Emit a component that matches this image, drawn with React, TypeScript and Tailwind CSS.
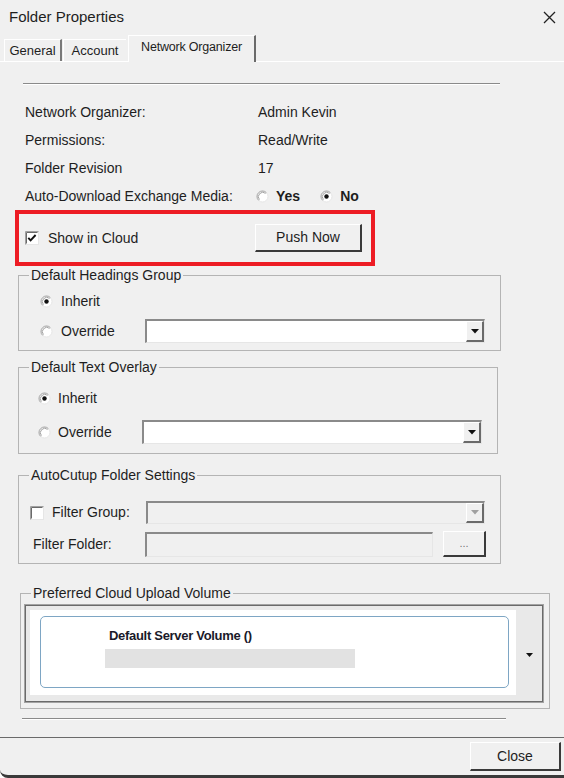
import React from "react";

function Radio({ checked }: { checked?: boolean }) {
  return (
    <svg width="13" height="13" viewBox="0 0 13 13" className="shrink-0">
      <circle cx="6.5" cy="6.5" r="5.5" fill="#fff" stroke="#e6e6e6" />
      <path d="M2.61 10.39 A5.5 5.5 0 0 1 10.39 2.61" fill="none" stroke="#a8a8a8" />
      <path d="M3.4 9.6 A4.4 4.4 0 0 1 9.6 3.4" fill="none" stroke="#7a7a7a" strokeWidth="0.7" />
      {checked && <circle cx="6.5" cy="6.5" r="2.2" fill="#111" />}
    </svg>
  );
}

function Check({ checked }: { checked?: boolean }) {
  return (
    <svg width="14" height="14" viewBox="0 0 14 14" className="shrink-0">
      <rect x="0.5" y="0.5" width="13" height="13" fill="#fff" stroke="#e6e6e6" />
      <path d="M0.5 13.5 V0.5 H13.5" fill="none" stroke="#a0a0a0" />
      <path d="M1.5 12.5 V1.5 H12.5" fill="none" stroke="#6a6a6a" />
      {checked && <path d="M3.3 6.8 L5.6 9.3 L10.6 4" fill="none" stroke="#111" strokeWidth="1.9" />}
    </svg>
  );
}

function Arrow({ disabled }: { disabled?: boolean }) {
  return (
    <svg width="8" height="5" viewBox="0 0 8 5">
      <polygon points="0,0 8,0 4,4.5" fill={disabled ? "#a0a0a0" : "#111"} />
    </svg>
  );
}

function Combo({ className, disabled }: { className: string; disabled?: boolean }) {
  return (
    <div
      className={`flex border-t-2 border-l-2 border-t-[#8a8a8a] border-l-[#8a8a8a] border-b border-r border-b-[#e6e6e6] border-r-[#e6e6e6] ${
        disabled ? "bg-[#f0f0f0]" : "bg-white"
      } ${className}`}
    >
      <div className="flex-1" />
      <div className="w-[18px] flex items-center justify-center bg-[#f0f0f0] border-t border-l border-t-white border-l-white border-b-2 border-r-2 border-b-[#6a6a6a] border-r-[#6a6a6a]">
        <Arrow disabled={disabled} />
      </div>
    </div>
  );
}

function Button({ className, children }: { className: string; children: React.ReactNode }) {
  return (
    <div
      className={`flex items-center justify-center bg-[#f0f0f0] border-t border-l border-t-white border-l-white border-b-2 border-r-2 border-b-[#3a3a3a] border-r-[#3a3a3a] ${className}`}
    >
      {children}
    </div>
  );
}

function Group({ title, className, children }: { title: string; className: string; children: React.ReactNode }) {
  return (
    <fieldset className={`border border-[#b4b4b4] ${className}`}>
      <legend className="ml-[10px] px-[2px] text-[14px] leading-[16px]">{title}</legend>
      {children}
    </fieldset>
  );
}

const info = [
  ["Network Organizer:", "Admin Kevin"],
  ["Permissions:", "Read/Write"],
  ["Folder Revision", "17"],
];

export default function App() {
  return (
    <div className="w-[564px] h-[778px] bg-[#f0f0f0] text-[#1e1e1e] font-['Liberation_Sans',Arial,sans-serif] flex flex-col overflow-hidden rounded-bl-[8px] border-b-[3px] border-[#3a3a3a]">
      {/* title bar */}
      <div className="h-[34px] shrink-0 flex items-center justify-between pl-[9px] pr-[8px]">
        <span className="text-[15px]">Folder Properties</span>
        <svg width="13" height="13" viewBox="0 0 13 13">
          <path d="M1 1 L12 12 M12 1 L1 12" stroke="#222" strokeWidth="1.3" />
        </svg>
      </div>

      {/* tabs */}
      <div className="h-[28px] shrink-0 flex items-end pl-[4px] border-b border-white">
        <div className="w-[58px] h-[22px] flex items-center justify-center text-[13px] border-t border-l border-t-white border-l-white border-r-2 border-r-[#7a7a7a]">
          General
        </div>
        <div className="w-[63px] ml-[1px] h-[22px] flex items-center justify-center text-[13px] border-t border-l border-t-white border-l-white">
          Account
        </div>
        <div className="w-[128px] ml-[2px] h-[27px] -mb-px bg-[#f0f0f0] flex items-center justify-center pb-[3px] text-[12.5px] tracking-[-0.2px] border-t border-l border-t-white border-l-white border-r-2 border-r-[#6a6a6a]">
          Network Organizer
        </div>
      </div>

      {/* tab page */}
      <div className="h-[676px] shrink-0 flex flex-col border-b border-[#6a6a6a] text-[14px]">
        <div className="mt-[21px] ml-[23px] w-[477px] h-[2px] border-t border-t-[#8a8a8a] border-b border-b-white" />

        <div className="mt-[13px] flex flex-col">
          {info.map(([k, v]) => (
            <div key={k} className="h-[28px] flex items-center pl-[25px]">
              <span className="w-[233px]">{k}</span>
              <span>{v}</span>
            </div>
          ))}
          <div className="h-[28px] flex items-center pl-[25px]">
            <span className="w-[231px]">Auto-Download Exchange Media:</span>
            <Radio />
            <span className="ml-[7px] font-bold">Yes</span>
            <span className="ml-[20px]">
              <Radio checked />
            </span>
            <span className="ml-[7px] font-bold">No</span>
          </div>
        </div>

        <div className="ml-[15px] w-[360px] h-[56px] border-4 border-[#ed1c24] flex items-center pl-[6px] pr-[9px]">
          <Check checked />
          <span className="ml-[9px]">Show in Cloud</span>
          <Button className="ml-auto w-[107px] h-[28px]">Push Now</Button>
        </div>

        <Group title="Default Headings Group" className="mt-[1px] ml-[18px] w-[483px]">
          <div className="pl-[21px] pt-[6px] pb-[7px] flex flex-col gap-[6px]">
            <div className="h-[24px] flex items-center">
              <Radio checked />
              <span className="ml-[8px]">Inherit</span>
            </div>
            <div className="h-[24px] flex items-center">
              <Radio />
              <span className="ml-[8px] w-[84px]">Override</span>
              <Combo className="w-[340px] h-[24px]" />
            </div>
          </div>
        </Group>

        <Group title="Default Text Overlay" className="mt-[8px] ml-[18px] w-[480px]">
          <div className="pl-[19px] pt-[11px] pb-[9px] flex flex-col gap-[10px]">
            <div className="h-[24px] flex items-center">
              <Radio checked />
              <span className="ml-[7px]">Inherit</span>
            </div>
            <div className="h-[24px] flex items-center">
              <Radio />
              <span className="ml-[7px] w-[84px]">Override</span>
              <Combo className="w-[340px] h-[24px]" />
            </div>
          </div>
        </Group>

        <Group title="AutoCutup Folder Settings" className="mt-[13px] ml-[18px] w-[483px]">
          <div className="pt-[18px] pb-[6px] flex flex-col gap-[7px]">
            <div className="h-[23px] flex items-center pl-[11px]">
              <Check />
              <span className="ml-[8px] w-[94px]">Filter Group:</span>
              <Combo className="w-[339px] h-[23px]" disabled />
            </div>
            <div className="h-[26px] flex items-center pl-[14px]">
              <span className="w-[112px]">Filter Folder:</span>
              <div className="w-[288px] h-[25px] bg-[#f0f0f0] border-t-2 border-l-2 border-t-[#8a8a8a] border-l-[#8a8a8a] border-b border-r border-b-[#e6e6e6] border-r-[#e6e6e6]" />
              <Button className="ml-[10px] w-[43px] h-[26px] text-[11px] text-[#777] leading-none">...</Button>
            </div>
          </div>
        </Group>

        <Group title="Preferred Cloud Upload Volume" className="mt-[21px] ml-[20px] w-[530px]">
          <div className="pl-[3px] pr-[5px] pt-[3px] pb-[5px]">
            <div className="border border-[#a3a3a3]">
              <div className="h-[97px] flex border border-[#6a6a6a] bg-[#e9e9e9]">
                <div className="flex-1 mt-[4px] ml-[4px] mb-[6px] bg-white pt-[6px] pl-[10px] pr-[7px] pb-[7px] flex">
                  <div className="flex-1 rounded-[5px] border border-[#7ea6c4] flex flex-col pl-[64px] pt-[11px]">
                    <span className="ml-[4px] text-[13px] font-bold tracking-[-0.3px] leading-[16px] text-[#1a1a2a]">
                      Default Server Volume ()
                    </span>
                    <div className="mt-[5px] w-[250px] h-[19px] bg-[#e2e2e2]" />
                  </div>
                </div>
                <div className="w-[26px] flex items-center justify-center pt-[2px]">
                  <svg width="7" height="4" viewBox="0 0 7 4">
                    <polygon points="0,0 7,0 3.5,4" fill="#111" />
                  </svg>
                </div>
              </div>
            </div>
          </div>
        </Group>

        <div className="mt-[9px] ml-[22px] w-[484px] h-[2px] border-t border-t-[#8a8a8a] border-b border-b-white" />
      </div>

      {/* bottom bar */}
      <div className="flex-1 flex justify-end items-start pt-[4px] pr-[3px]">
        <Button className="w-[91px] h-[29px] text-[14px]">Close</Button>
      </div>
    </div>
  );
}
